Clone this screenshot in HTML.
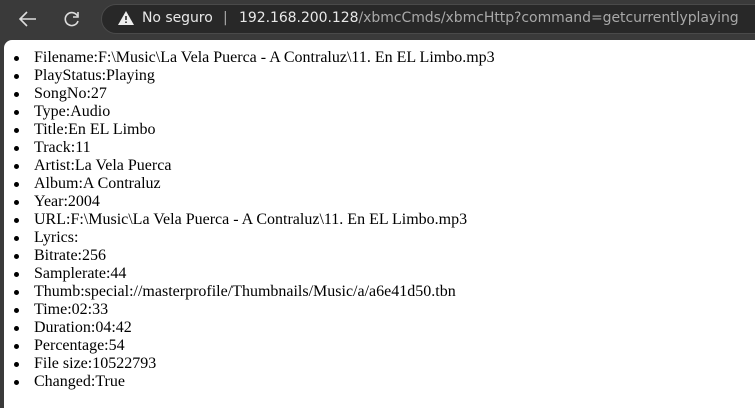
<!DOCTYPE html>
<html><head><style>
html,body{margin:0;padding:0;width:755px;height:408px;overflow:hidden;background:#3a3a3a;}
#bar{position:absolute;left:0;top:0;width:755px;height:40px;background:#3a3a3a;}
#omni{position:absolute;left:101px;top:4px;width:680px;height:30px;border-radius:16px;background:#282828;border:1px solid #4a4a4a;box-sizing:border-box;}
.t{position:absolute;top:10px;font:14px "DejaVu Sans","Liberation Sans",sans-serif;color:#e8e8e8;white-space:nowrap;letter-spacing:-0.05px;}
.g{color:#a8a8a8}
#page{position:absolute;left:4px;top:40px;width:751px;height:368px;background:#fff;border-top-left-radius:8px;}
ul{margin:0;padding:0;position:absolute;left:30px;top:9px;list-style:none;font:16px "Liberation Serif",serif;line-height:18px;color:#000;}
li{white-space:nowrap;position:relative}
li:before{content:"";position:absolute;left:-20px;top:7px;width:5px;height:5px;border-radius:50%;background:#000;}
</style></head><body>
<div id="bar">
<svg style="position:absolute;left:18px;top:10px" width="20" height="18" viewBox="0 0 20 18"><path d="M18 9H3M9 2L2 9l7 7" fill="none" stroke="#ddd" stroke-width="1.6"/></svg>
<svg style="position:absolute;left:62px;top:9px" width="20" height="20" viewBox="0 0 20 20"><path d="M15.5 7A6.5 6.5 0 1 0 16 12" fill="none" stroke="#ddd" stroke-width="1.6"/><path d="M16 3v5h-5" fill="none" stroke="#ddd" stroke-width="1.6"/></svg>
<div id="omni"></div>
<svg style="position:absolute;left:118px;top:11px" width="16" height="14" viewBox="0 0 16 14"><path d="M8 0L16 14H0Z" fill="#eee"/><path d="M8 5v4M8 10.5v1.5" stroke="#282828" stroke-width="1.6"/></svg>
<div class="t" style="left:142px">No seguro</div>
<div class="t g" style="left:223px">|</div>
<div class="t" style="left:239px">192.168.200.128<span class="g">/xbmcCmds/xbmcHttp?command=getcurrentlyplaying</span></div>
</div>
<div id="page"><ul>
<li>Filename:F:\Music\La Vela Puerca - A Contraluz\11. En EL Limbo.mp3</li>
<li>PlayStatus:Playing</li>
<li>SongNo:27</li>
<li>Type:Audio</li>
<li>Title:En EL Limbo</li>
<li>Track:11</li>
<li>Artist:La Vela Puerca</li>
<li>Album:A Contraluz</li>
<li>Year:2004</li>
<li>URL:F:\Music\La Vela Puerca - A Contraluz\11. En EL Limbo.mp3</li>
<li>Lyrics:</li>
<li>Bitrate:256</li>
<li>Samplerate:44</li>
<li>Thumb:special://masterprofile/Thumbnails/Music/a/a6e41d50.tbn</li>
<li>Time:02:33</li>
<li>Duration:04:42</li>
<li>Percentage:54</li>
<li>File size:10522793</li>
<li>Changed:True</li>
</ul></div>
</body></html>
